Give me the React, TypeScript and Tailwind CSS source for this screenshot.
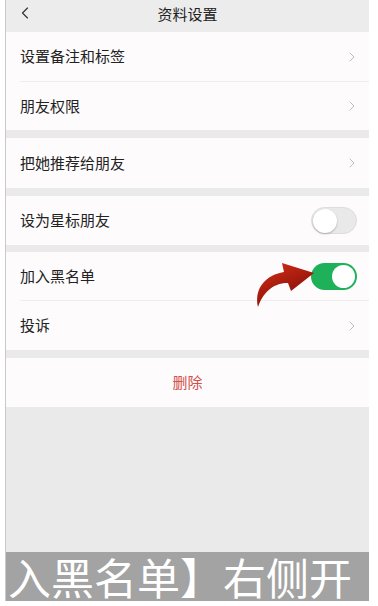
import { ChevronLeft, ChevronRight } from 'lucide-react';

const font = { fontFamily: '"Noto Sans CJK SC", "Noto Sans", sans-serif' };

const Chevron = () => (
  <ChevronRight className="h-4 w-4 text-[#bdbdbd]" strokeWidth={1.5} />
);

const Toggle = ({ on }: { on: boolean }) =>
  on ? (
    <div className="mr-[3px] flex h-[27px] w-[46px] items-center justify-end rounded-full bg-[#1fb05a] p-[2px]">
      <div className="h-[23px] w-[23px] rounded-full bg-white" />
    </div>
  ) : (
    <div className="mr-[3px] flex h-[27px] w-[46px] items-center justify-start rounded-full border border-[#dddddd] bg-[#e9e9e9] p-[1px]">
      <div className="h-[24px] w-[24px] rounded-full bg-white shadow-[0_1px_2px_rgba(0,0,0,0.25)]" />
    </div>
  );

const Row = ({
  label,
  right,
  divider,
  h = 'h-[49px]',
}: {
  label: string;
  right: React.ReactNode;
  divider?: boolean;
  h?: string;
}) => (
  <div className={`flex ${h} items-center bg-[#fdfbfc] pl-[14px]`}>
    <div
      className={`flex h-full flex-1 items-center justify-between pr-[9px] ${
        divider ? 'border-b border-[#efeced]' : ''
      }`}
    >
      <span className="text-[15px] text-[#222]">{label}</span>
      {right}
    </div>
  </div>
);

const Arrow = () => (
  <svg
    className="absolute left-[245px] top-[6px]"
    width="70"
    height="54"
    viewBox="0 0 70 54"
  >
    <defs>
      <linearGradient id="ar" x1="0" y1="0" x2="0.6" y2="1">
        <stop offset="0" stopColor="#d8301a" />
        <stop offset="1" stopColor="#7e0c04" />
      </linearGradient>
    </defs>
    <path
      d="M7 49 C3 31 14 17 33 14 L31 5 L63 15 L40 33 L37 25 C24 25 13 32 7 49 Z"
      fill="url(#ar)"
    />
  </svg>
);

export default function App() {
  return (
    <div className="h-[606px] w-[378px] bg-white" style={font}>
      <div className="ml-[5px] flex h-[601px] w-[364px] flex-col border-l border-[#c9c9c9] bg-[#ebeaeb]">
        <div className="relative flex h-[32px] items-center justify-center bg-[#ececec] pb-[4px]">
          <ChevronLeft
            className="absolute left-[9px] top-[3px] h-[20px] w-[20px] text-[#333]"
            strokeWidth={1.4}
          />
          <span className="text-[15px] text-[#222]">资料设置</span>
        </div>

        <Row label="设置备注和标签" right={<Chevron />} divider h="h-[50px]" />
        <Row label="朋友权限" right={<Chevron />} h="h-[48px]" />
        <div className="h-[8px]" />
        <Row label="把她推荐给朋友" right={<Chevron />} h="h-[50px]" />
        <div className="h-[8px]" />
        <Row label="设为星标朋友" right={<Toggle on={false} />} />
        <div className="h-[7px]" />
        <div className="relative">
          <Row label="加入黑名单" right={<Toggle on />} divider />
          <Arrow />
        </div>
        <Row label="投诉" right={<Chevron />} />
        <div className="h-[8px]" />
        <div className="flex h-[49px] items-center justify-center bg-[#fdfbfc]">
          <span className="text-[15px] text-[#d2504a]">删除</span>
        </div>

        <div className="flex-1" />

        <div className="flex h-[49px] items-center bg-[#a3a3a3] pl-[2px]">
          <span className="whitespace-nowrap text-[43px] leading-[49px] text-white">
            入黑名单】右侧开
          </span>
        </div>
      </div>
    </div>
  );
}
